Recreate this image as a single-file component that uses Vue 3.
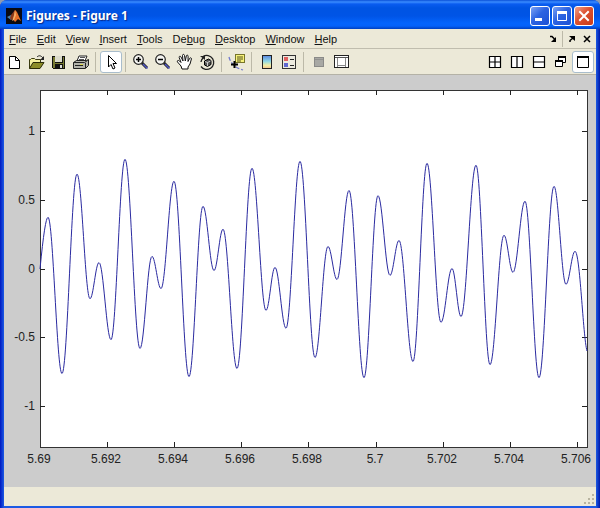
<template>
  <div class="window">
    <header class="title-bar">
      <svg class="app-icon" width="16" height="16" viewBox="0 0 16 16">
        <rect width="16" height="16" fill="#0a0a12" />
        <path d="M1 9l4-2 2 2-2 3z" fill="#4a7fa8" />
        <path d="M5 7l4-5 2 3-3 6-3 1-1-2z" fill="#8c3a1c" />
        <path d="M9 2l2 2 4 9-3-2-3 3-2-3z" fill="#e8702a" />
        <path d="M9 2l1 5-2 5-2 1 2-5z" fill="#f5b26b" />
      </svg>
      <h1>Figures - Figure 1</h1>
      <div class="window-buttons">
        <button type="button" aria-label="Minimize">
          <svg width="18" height="18" viewBox="0 0 18 18"><rect x="4" y="11" width="7" height="3" fill="#fff" /></svg>
        </button>
        <button type="button" aria-label="Maximize">
          <svg width="18" height="18" viewBox="0 0 18 18">
            <path d="M4.5 5v8.5h9V5" fill="none" stroke="#fff" />
            <rect x="4" y="4" width="10" height="3" fill="#fff" />
          </svg>
        </button>
        <button type="button" class="close" aria-label="Close">
          <svg width="18" height="18" viewBox="0 0 18 18"><path d="M5 5l8 8M13 5l-8 8" stroke="#fff" stroke-width="2" stroke-linecap="square" /></svg>
        </button>
      </div>
    </header>

    <nav class="menu-bar">
      <button v-for="item in menu" :key="item.label" type="button">
        <span>{{ item.label.slice(0, item.key) }}</span><u>{{ item.label[item.key] }}</u><span>{{ item.label.slice(item.key + 1) }}</span>
      </button>
      <div class="dock-buttons">
        <button type="button" aria-label="Dock">
          <svg width="8" height="8" viewBox="0 0 8 8"><path d="M1 1.5h2l2.500 2.500" fill="none" stroke="#000" stroke-width="1.500" /><path d="M7 2v5H2z" /></svg>
        </button>
        <i class="divider"></i>
        <button type="button" aria-label="Undock">
          <svg width="8" height="8" viewBox="0 0 8 8"><path d="M2 7V5.500L5 3" fill="none" stroke="#000" stroke-width="1.500" /><path d="M1 1h6v5z" /></svg>
        </button>
        <button type="button" class="close-figure" aria-label="Close figure">
          <svg width="8" height="8" viewBox="0 0 8 8"><path d="M1 1l6 6M7 1l-6 6" stroke="#000" stroke-width="1.500" /></svg>
        </button>
      </div>
    </nav>

    <div class="tool-bar">
      <button type="button" aria-label="New figure">
        <svg width="20" height="20" viewBox="0 0 20 20"><path d="M4.500 4.500h6l4 4v8h-10z" fill="#fff" stroke="#000" /><path d="M10.500 4.500v4h4" fill="none" stroke="#000" /></svg>
      </button>
      <button type="button" aria-label="Open file">
        <svg width="20" height="20" viewBox="0 0 20 20">
          <path d="M2.500 16.500v-9h1l1-1h3l1 1h5v3" fill="#f4f0a0" stroke="#3a3a10" />
          <path d="M2.500 16.500l3.500-6h11l-4 6z" fill="#8c8c28" stroke="#2a2a08" />
          <path d="M10 5c2-2 4-1.500 6 1" fill="none" stroke="#222" />
          <path d="M17 4v4h-4z" fill="#222" />
        </svg>
      </button>
      <button type="button" aria-label="Save">
        <svg width="20" height="20" viewBox="0 0 20 20" shape-rendering="crispEdges">
          <path d="M3 4h13v13H4l-1-1z" fill="#111" />
          <path d="M4 5h2v6h8V5h1v11H4z" fill="#777a32" />
          <rect x="6" y="4" width="7" height="6" fill="#dcdccc" />
          <rect x="6" y="12" width="8" height="5" fill="#111" />
          <rect x="11" y="13" width="2" height="3" fill="#ddd" />
        </svg>
      </button>
      <button type="button" aria-label="Print">
        <svg width="20" height="20" viewBox="0 0 20 20">
          <path d="M6 9l2-5h8l-2 5z" fill="#fff" stroke="#222" />
          <path d="M9 5.500h5M8 7.500h5" stroke="#555" />
          <path d="M2.500 10.500l3-2h10l2-1v6l-3 3h-12z" fill="#b4b4ac" stroke="#222" />
          <path d="M2.500 10.500h11l3-2M14.500 11v5" fill="none" stroke="#222" />
          <path d="M4 13.500h8" stroke="#222" />
          <path d="M9 12.500h3" stroke="#ded84a" />
        </svg>
      </button>
      <i class="divider"></i>
      <button type="button" class="active" aria-label="Edit plot" aria-pressed="true">
        <svg width="20" height="20" viewBox="0 0 20 20"><path d="M7.500 3.500v11.500l2.500-2.500 2 4.500 2-1-2-4.500h3.500z" fill="#fff" stroke="#000" /></svg>
      </button>
      <i class="divider"></i>
      <button type="button" aria-label="Zoom in">
        <svg width="20" height="20" viewBox="0 0 20 20">
          <circle cx="7.500" cy="7.500" r="4.800" fill="#f4f4f0" stroke="#222" stroke-width="1.200" />
          <path d="M5 7.500h5M7.500 5v5" stroke="#000" stroke-width="1.500" />
          <path d="M11 11l5 5" stroke="#222" stroke-width="3" />
          <path d="M12 12l4.500 4.500" stroke="#5158c4" stroke-width="1.500" />
        </svg>
      </button>
      <button type="button" aria-label="Zoom out">
        <svg width="20" height="20" viewBox="0 0 20 20">
          <circle cx="7.500" cy="7.500" r="4.800" fill="#f4f4f0" stroke="#222" stroke-width="1.200" />
          <path d="M5 7.500h5" stroke="#000" stroke-width="1.500" />
          <path d="M11 11l5 5" stroke="#222" stroke-width="3" />
          <path d="M12 12l4.500 4.500" stroke="#5158c4" stroke-width="1.500" />
        </svg>
      </button>
      <button type="button" aria-label="Pan">
        <svg width="20" height="20" viewBox="0 0 20 20">
          <path d="M7 17l-1-3-3.500-4c-.8-1.600 1-2 2-1l1.500 1.500L4.200 5.500c-.3-1.500 1.300-1.700 1.800-.5L8 9 7.500 3.500c0-1.500 1.800-1.500 2 0L10.300 9l1-5c.3-1.300 2-1 1.800.3L13 9.500l1.700-3.200c.7-1 2-.4 1.700.7L15 12l-2 3v2z" fill="#fff" stroke="#111" />
        </svg>
      </button>
      <button type="button" aria-label="Rotate 3D">
        <svg width="20" height="20" viewBox="0 0 20 20">
          <path d="M6 4.500a7 7 0 1 1-2 10M4 10a6.500 6.500 0 0 1 2-4" fill="none" stroke="#222" stroke-width="1.300" />
          <path d="M3 4h5v4z" fill="#222" />
          <path d="M7.500 9l4-2 2.500 1.500v4l-3.500 2-3-1.500z" fill="#555" stroke="#000" />
          <path d="M8 9.500l2.500 1v3.500M10.500 10.500l3-1.500" fill="none" stroke="#e6e6e6" stroke-width=".8" />
        </svg>
      </button>
      <i class="divider"></i>
      <button type="button" aria-label="Data cursor">
        <svg width="20" height="20" viewBox="0 0 20 20">
          <path d="M2 5c1 4 3 7 7 10 3 2 5 2 7 3" fill="none" stroke="#7078d0" stroke-width="1.300" stroke-dasharray="4 2" />
          <rect x="8.500" y="2.500" width="9" height="8" fill="#f7f27a" stroke="#77752a" />
          <path d="M10 5h6M10 7h6M10 9h4" stroke="#55531c" />
          <path d="M7.500 9v7M4 12.500h7" stroke="#000" stroke-width="2" />
        </svg>
      </button>
      <i class="divider"></i>
      <button type="button" aria-label="Insert colorbar">
        <svg width="20" height="20" viewBox="0 0 20 20">
          <defs>
            <linearGradient id="colorbar" x2="0" y2="1">
              <stop offset="0" stop-color="#5c86e0" />
              <stop offset=".45" stop-color="#8fd8e6" />
              <stop offset=".75" stop-color="#f3f0a4" />
              <stop offset="1" stop-color="#f3c493" />
            </linearGradient>
          </defs>
          <rect x="5.500" y="3.500" width="9" height="13" fill="url(#colorbar)" stroke="#222" />
        </svg>
      </button>
      <button type="button" aria-label="Insert legend">
        <svg width="20" height="20" viewBox="0 0 20 20" shape-rendering="crispEdges">
          <rect x="3.500" y="3.500" width="13" height="13" fill="#eceadf" stroke="#333" />
          <rect x="5" y="5" width="4" height="4" fill="#e06060" />
          <rect x="5" y="11" width="4" height="4" fill="#6068d0" />
          <path d="M11 7.500h4M11 13.500h4" stroke="#222" />
        </svg>
      </button>
      <i class="divider"></i>
      <button type="button" aria-label="Hide plot tools">
        <svg width="20" height="20" viewBox="0 0 20 20" shape-rendering="crispEdges">
          <rect x="5.500" y="5.500" width="9" height="9" fill="#a8a8a4" stroke="#8a8a88" />
          <path d="M6 7.500h8" stroke="#929290" />
        </svg>
      </button>
      <button type="button" aria-label="Show plot tools">
        <svg width="20" height="20" viewBox="0 0 20 20" shape-rendering="crispEdges">
          <rect x="3.500" y="3.500" width="14" height="12" fill="#fff" stroke="#222" />
          <path d="M4 5.500h13" stroke="#555" />
          <path d="M6.500 6v9M14.500 6v9M7 13.500h7" stroke="#888" />
        </svg>
      </button>

      <div class="layout-buttons">
        <button type="button" aria-label="Tile">
          <svg width="20" height="20" viewBox="0 0 20 20"><path d="M4.500 4.500h11v11h-11zM10 4.500v11M4.500 10h11" fill="#fff" stroke="#000" stroke-width="1.200" /></svg>
        </button>
        <button type="button" aria-label="Left and right split">
          <svg width="20" height="20" viewBox="0 0 20 20"><path d="M4.500 4.500h11v11h-11zM10 4.500v11" fill="#fff" stroke="#000" stroke-width="1.200" /></svg>
        </button>
        <button type="button" aria-label="Top and bottom split">
          <svg width="20" height="20" viewBox="0 0 20 20"><path d="M4.500 4.500h11v11h-11zM4.500 10h11" fill="#fff" stroke="#000" stroke-width="1.200" /></svg>
        </button>
        <button type="button" aria-label="Float">
          <svg width="20" height="20" viewBox="0 0 20 20">
            <path d="M7.500 5.500h7v5h-7z" fill="#fff" stroke="#000" /><path d="M7 5h8" stroke="#000" stroke-width="2" />
            <path d="M4.500 9.500h7v5h-7z" fill="#fff" stroke="#000" /><path d="M4 9h8" stroke="#000" stroke-width="2" />
          </svg>
        </button>
        <button type="button" class="active" aria-label="Maximize figure" aria-pressed="true">
          <svg width="20" height="20" viewBox="0 0 20 20"><path d="M4.500 4.500h11v11h-11z" fill="#fff" stroke="#000" /><path d="M4 5h12" stroke="#000" stroke-width="2" /></svg>
        </button>
      </div>
    </div>

    <main ref="canvas" class="canvas">
      <svg class="plot" :width="size.width" :height="size.height">
        <rect :x="area.left" :y="area.top" :width="area.width" :height="area.height" fill="#fff" stroke="#333" shape-rendering="crispEdges" />
        <path :d="ticks" class="ticks" />
        <path :d="curve" class="curve" />
        <text v-for="v in xTicks" :key="v" :x="px(v) - 1" :y="area.top + area.height + 16" text-anchor="middle">{{ v }}</text>
        <text v-for="v in yTicks" :key="v" :x="area.left - 5" :y="py(v) + 4" text-anchor="end">{{ v }}</text>
      </svg>
    </main>

    <footer class="status-bar">
      <svg width="12" height="12" viewBox="0 0 12 12" fill="#b8b4a0">
        <path d="M8 0h2v2H8zM4 4h2v2H4zM8 4h2v2H8zM0 8h2v2H0zM4 8h2v2H4zM8 8h2v2H8z" />
      </svg>
    </footer>
  </div>
</template>

<script setup>
import { ref, computed, onMounted, onBeforeUnmount } from 'vue'

const menu = [
  { label: 'File', key: 0 },
  { label: 'Edit', key: 0 },
  { label: 'View', key: 0 },
  { label: 'Insert', key: 0 },
  { label: 'Tools', key: 0 },
  { label: 'Debug', key: 2 },
  { label: 'Desktop', key: 0 },
  { label: 'Window', key: 0 },
  { label: 'Help', key: 0 }
]

const xRange = [5.69, 5.7063]
const yRange = [-1.3, 1.3]
const xTicks = [5.69, 5.692, 5.694, 5.696, 5.698, 5.7, 5.702, 5.704, 5.706]
const yTicks = [1, 0.5, 0, -0.5, -1]

// turning points of the signal: [position along the axis in 1/547, value * 1000]
const peaks = [
  [8, 373], [22, -765], [37, 687], [50, -220], [59, 43], [71, -518], [85, 795],
  [100, -582], [112, 88], [121, -146], [134, 635], [149, -787], [163, 453],
  [174, -15], [183, 286], [197, -728], [212, 730], [226, -305], [235, 8],
  [246, -435], [260, 780], [275, -648], [288, 160], [297, -80], [309, 568],
  [324, -795], [338, 530], [350, -50], [359, 204], [373, -677], [387, 766],
  [401, -392], [412, 0], [421, -350], [436, 752], [450, -700], [464, 242],
  [473, -28], [485, 490], [499, -795], [514, 598], [526, -115], [535, 125]
]

const canvas = ref(null)
const size = ref({ width: 592, height: 412 })
const area = computed(() => ({
  left: 36,
  top: 15,
  width: size.value.width - 45,
  height: size.value.height - 55
}))

const px = (v) => Math.round(area.value.left + ((v - xRange[0]) / (xRange[1] - xRange[0])) * area.value.width)
const py = (v) => Math.round(area.value.top + ((yRange[1] - v) / (yRange[1] - yRange[0])) * area.value.height)

const ticks = computed(() => {
  const { left, top, width, height } = area.value
  const vertical = xTicks.slice(1).map((v) => `M${px(v)} ${top}v5M${px(v)} ${top + height}v-5`)
  const horizontal = yTicks.map((v) => `M${left} ${py(v)}h5M${left + width} ${py(v)}h-5`)
  return vertical.concat(horizontal).join('')
})

const curve = computed(() => {
  const { left, top, width, height } = area.value
  const points = peaks.map(([x, y]) => [
    left + (x / 547) * width,
    top + ((yRange[1] - y / 1000) / (yRange[1] - yRange[0])) * height
  ])
  const zero = py(0)
  let d = `M${left} ${zero}Q${left + 5} ${points[0][1]} ${points[0][0]} ${points[0][1]}`
  for (let i = 1; i < points.length; i++) {
    const [x0, y0] = points[i - 1]
    const [x1, y1] = points[i]
    const bend = (x1 - x0) * 0.37
    d += `C${x0 + bend} ${y0} ${x1 - bend} ${y1} ${x1} ${y1}`
  }
  const [lx, ly] = points[points.length - 1]
  d += `C${lx + 5} ${ly} ${left + width - 4} ${py(-0.5)} ${left + width} ${py(-0.6)}`
  return d
})

let observer
onMounted(() => {
  observer = new ResizeObserver(([entry]) => {
    size.value = {
      width: Math.round(entry.contentRect.width),
      height: Math.round(entry.contentRect.height)
    }
  })
  observer.observe(canvas.value)
})
onBeforeUnmount(() => observer.disconnect())
</script>

<style>
body {
  margin: 0;
  background: #8f9bb0;
}
</style>

<style scoped>
.window {
  min-height: 100vh;
  box-sizing: border-box;
  display: flex;
  flex-direction: column;
  padding: 0 4px 2px;
  background: linear-gradient(90deg, #0018c0, #1c5ae4 4px, #1c5ae4 calc(100% - 4px), #0018a8);
  border-radius: 7px 7px 0 0;
  overflow: hidden;
  font-family: "Liberation Sans", Arial, sans-serif;
  font-size: 11px;
  color: #111;
}

button {
  padding: 0;
  border: none;
  background: none;
  font: inherit;
  color: inherit;
}

svg {
  display: block;
}

.title-bar {
  display: flex;
  align-items: center;
  gap: 4px;
  height: 29px;
  margin: 0 -4px;
  padding: 2px 6px 0;
  box-sizing: border-box;
  background: linear-gradient(#0a50d8, #3a8cff 2px, #0a5cf0 4px, #0054e3 8px, #0054e6 16px, #0464fc 23px, #0462fa 26px, #0040c0);
}

.title-bar h1 {
  flex: 1;
  margin: 0;
  font-family: "Noto Sans", sans-serif;
  font-size: 12px;
  font-weight: 700;
  color: #fff;
  text-shadow: 1px 1px 1px #0a2a8c;
}

.window-buttons {
  display: flex;
  gap: 2px;
}

.window-buttons button {
  width: 20px;
  height: 20px;
  border: 1px solid #fff;
  border-radius: 3px;
  background: linear-gradient(135deg, #7ba2f4, #2c63e2 45%, #1c50d4);
}

.window-buttons .close {
  background: linear-gradient(135deg, #f0a088, #dc5030 45%, #c83c18);
}

.menu-bar {
  display: flex;
  align-items: center;
  gap: 10px;
  height: 19px;
  padding: 0 5px;
  background: #ece9d8;
  border-bottom: 1px solid #c0bdae;
}

.dock-buttons {
  display: flex;
  align-items: center;
  gap: 5px;
  margin-left: auto;
}

.close-figure {
  margin-left: 2px;
}

.divider {
  width: 1px;
  height: 16px;
  background: #bcb9a8;
}

.tool-bar {
  display: flex;
  align-items: center;
  height: 25px;
  padding-right: 2px;
  background: #ece9d8;
  border-bottom: 1px solid #b4b2a6;
}

.tool-bar button {
  display: flex;
  align-items: center;
  justify-content: center;
  flex: none;
  width: 22px;
  height: 22px;
  box-sizing: border-box;
}

.tool-bar .active {
  background: #fff;
  border: 1px solid #a9bdcc;
  border-radius: 3px;
}

.tool-bar .active svg {
  flex: none;
}

.tool-bar .divider {
  flex: none;
  height: 20px;
  margin: 0 4px 0 3px;
}

.layout-buttons {
  display: flex;
  margin-left: auto;
}

.canvas {
  flex: 1;
  min-height: 200px;
  overflow: hidden;
  position: relative;
  background: #ccc;
}

.plot {
  position: absolute;
  font-size: 12px;
  fill: #222;
}

.ticks {
  stroke: #222;
  fill: none;
  shape-rendering: crispEdges;
}

.curve {
  stroke: #2a2aa0;
  fill: none;
}

.status-bar {
  display: flex;
  align-items: flex-end;
  justify-content: flex-end;
  height: 19px;
  background: #ece9d8;
}
</style>
